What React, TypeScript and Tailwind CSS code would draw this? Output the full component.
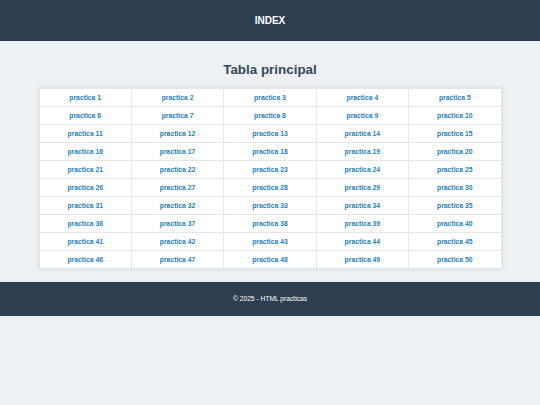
const practicas = Array.from({ length: 50 }, (_, i) => i + 1);

const rows: number[][] = [];
for (let i = 0; i < practicas.length; i += 5) {
  rows.push(practicas.slice(i, i + 5));
}

export default function App() {
  return (
    <div className="min-h-[405px] bg-[#edf1f4] font-['Liberation_Sans',Arial,sans-serif]">
      <header className="h-[41px] bg-[#2c3e50] flex items-center justify-center">
        <h1 className="text-white font-bold text-[10px]">INDEX</h1>
      </header>

      <main className="pt-[20px] pb-[13px]">
        <h2 className="text-center font-bold text-[13.4px] text-[#34495e] leading-[18px] mb-[9px]">
          Tabla principal
        </h2>
        <table className="w-[463px] mx-auto bg-white border-collapse shadow-[0_0_4px_rgba(0,0,0,0.12)]">
          <tbody>
            {rows.map((row, r) => (
              <tr key={r} className="h-[18px]">
                {row.map((n) => (
                  <td
                    key={n}
                    className="border border-[#e6e6e6] text-center align-middle w-1/5 p-0 pt-px text-[6.8px] leading-none"
                  >
                    <a href="#" className="text-[#2980b9] font-bold">
                      practica {n}
                    </a>
                  </td>
                ))}
              </tr>
            ))}
          </tbody>
        </table>
      </main>

      <footer className="h-[34px] bg-[#2c3e50] flex items-center justify-center">
        <p className="text-white text-[6.7px]">© 2025 - HTML practicas</p>
      </footer>
    </div>
  );
}
